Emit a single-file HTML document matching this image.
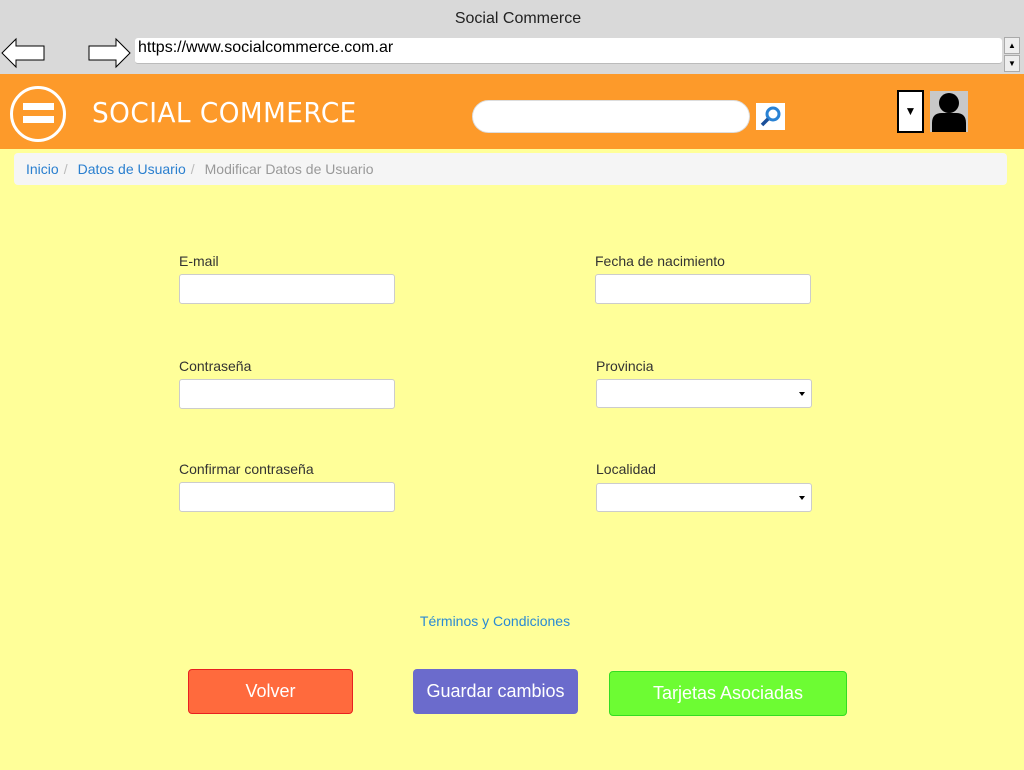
<!DOCTYPE html>
<html><head><meta charset="utf-8"><style>
*{box-sizing:border-box;margin:0;padding:0}
body{width:1024px;height:770px;background:#ffff99;font-family:"Liberation Sans",Arial,sans-serif;position:relative;overflow:hidden}
.a{position:absolute}
.lbl{position:absolute;font-size:14px;color:#333}
.in{position:absolute;background:#fff;border:1px solid #ccc;border-radius:3px;width:216px;height:30px}
.sel{position:absolute;background:#fff;border:1px solid #ccc;border-radius:3px;width:216px;height:29px}
.sel:after{content:"";position:absolute;right:6px;top:12px;border-left:3.5px solid transparent;border-right:3.5px solid transparent;border-top:4px solid #000}
.btn{position:absolute;color:#fff;font-size:18px;text-align:center;border-radius:4px}
.sep{color:#bbb;margin:0 10px 0 5px}
</style></head><body>
<div class="a" style="left:0;top:0;width:1024px;height:74px;background:#d9d9d9"></div>
<div class="a" style="left:0;top:10px;width:1036px;text-align:center;font-size:16px;color:#222">Social Commerce</div>
<svg class="a" style="left:0;top:36px" width="140" height="36"><path d="M2 17 L16 3 L16 10 L44 10 L44 24 L16 24 L16 31 Z" fill="#fff" stroke="#000" stroke-width="1"/><path d="M130 17 L116 3 L116 10 L89 10 L89 24 L116 24 L116 31 Z" fill="#fff" stroke="#000" stroke-width="1"/></svg>
<div class="a" style="left:135px;top:38px;width:867px;height:26px;background:#fff;border-radius:3px;border-bottom:1px solid #bbb;font-size:16px;padding:1px 3px;color:#000">https://www.socialcommerce.com.ar</div>
<div class="a" style="left:1004px;top:37px;width:16px;height:17px;background:#eee;border:1px solid #aaa;font-size:8px;text-align:center;line-height:15px">▲</div>
<div class="a" style="left:1004px;top:55px;width:16px;height:17px;background:#eee;border:1px solid #aaa;font-size:8px;text-align:center;line-height:15px">▼</div>
<div class="a" style="left:0;top:74px;width:1024px;height:75px;background:#fd9a2a"></div>
<div class="a" style="left:10px;top:86px;width:56px;height:56px;border:3px solid #fff;border-radius:50%"></div>
<div class="a" style="left:23px;top:103px;width:31px;height:7px;background:#fff"></div>
<div class="a" style="left:23px;top:116px;width:31px;height:7px;background:#fff"></div>
<div class="a" style="left:92px;top:96px;font-size:28px;color:#fff;font-family:'Comic Sans MS','DejaVu Sans',sans-serif;letter-spacing:0.5px;transform:scaleX(0.94);transform-origin:left">SOCIAL COMMERCE</div>
<div class="a" style="left:472px;top:100px;width:278px;height:33px;background:#fff;border-radius:17px;border:1px solid #ddd"></div>
<div class="a" style="left:756px;top:103px;width:29px;height:27px;background:#fff"></div>
<svg class="a" style="left:756px;top:103px" width="29" height="27"><circle cx="17" cy="11" r="6" fill="none" stroke="#2a82d4" stroke-width="3"/><line x1="12" y1="16" x2="6" y2="22" stroke="#1a4f9a" stroke-width="3.5"/></svg>
<div class="a" style="left:897px;top:90px;width:27px;height:43px;background:#fff;border:2px solid #000;font-size:12px;text-align:center;line-height:39px">▼</div>
<div class="a" style="left:930px;top:91px;width:38px;height:41px;background:#c8c8c8;overflow:hidden"><svg width="38" height="41"><circle cx="19" cy="12" r="10" fill="#000"/><path d="M2 41 L2 32 Q2 22 12 22 L26 22 Q36 22 36 32 L36 41 Z" fill="#000"/></svg></div>
<div class="a" style="left:14px;top:153px;width:993px;height:32px;background:#f5f5f5;border-radius:4px;font-size:14px;padding:8px 12px;color:#999"><span style="color:#2a7fcf">Inicio</span><span class="sep">/</span><span style="color:#2a7fcf">Datos de Usuario</span><span class="sep">/</span>Modificar Datos de Usuario</div>
<div class="lbl" style="left:179px;top:253px">E-mail</div>
<div class="in" style="left:179px;top:274px"></div>
<div class="lbl" style="left:179px;top:358px">Contraseña</div>
<div class="in" style="left:179px;top:379px"></div>
<div class="lbl" style="left:179px;top:461px">Confirmar contraseña</div>
<div class="in" style="left:179px;top:482px"></div>
<div class="lbl" style="left:595px;top:253px">Fecha de nacimiento</div>
<div class="in" style="left:595px;top:274px"></div>
<div class="lbl" style="left:596px;top:358px">Provincia</div>
<div class="sel" style="left:596px;top:379px"></div>
<div class="lbl" style="left:596px;top:461px">Localidad</div>
<div class="sel" style="left:596px;top:483px"></div>
<div class="a" style="left:395px;top:613px;width:200px;text-align:center;font-size:14px;color:#2a8ad4">Términos y Condiciones</div>
<div class="btn" style="left:188px;top:669px;width:165px;height:45px;background:#ff6a3d;border:1px solid #e82020;line-height:43px">Volver</div>
<div class="btn" style="left:413px;top:669px;width:165px;height:45px;background:#6b6bcc;line-height:44px">Guardar cambios</div>
<div class="btn" style="left:609px;top:671px;width:238px;height:45px;background:#6dfc33;border:1px solid #33dd22;line-height:43px">Tarjetas Asociadas</div>
</body></html>
